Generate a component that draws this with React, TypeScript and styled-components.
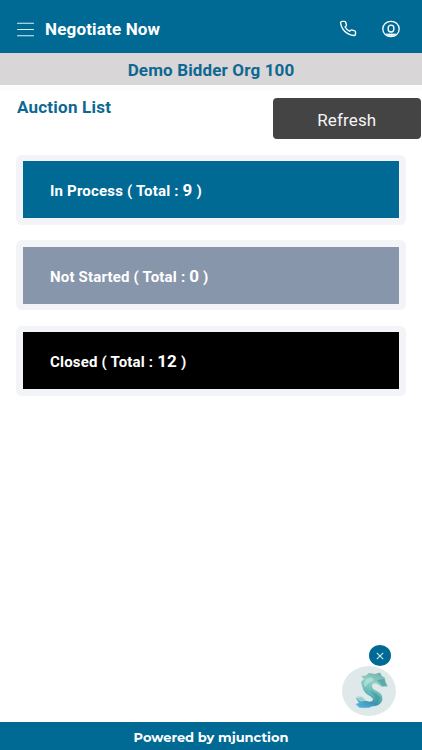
import React from "react";
import styled, { createGlobalStyle } from "styled-components";

const Global = createGlobalStyle`
  * { box-sizing: border-box; }
  html, body { margin: 0; padding: 0; background: #fff; }
  body { font-family: Roboto, "Liberation Sans", sans-serif; overflow: hidden; }
`;

const Screen = styled.div`
  display: flex;
  flex-direction: column;
  height: 750px;
  width: 100%;
  position: relative;
`;

const Header = styled.header`
  flex: none;
  height: 53px;
  background: #006a95;
  color: #fff;
  display: flex;
  align-items: center;
  padding: 5px 22px 0 17px;
`;

const Title = styled.h1`
  margin: 0 auto 0 11px;
  font-size: 17px;
  line-height: 20px;
  font-weight: 700;
  letter-spacing: 0.17px;
`;

const PhoneIcon = styled.svg`
  margin: -2px 25px 0 0;
`;

const UserIcon = styled.svg`
  margin-top: -1px;
`;

const OrgBand = styled.div`
  flex: none;
  height: 32px;
  background: #d8d6d7;
  color: #0d6891;
  text-align: center;
  font-size: 17px;
  line-height: 34px;
  font-weight: 700;
  letter-spacing: 0.15px;
`;

const Content = styled.main`
  flex: 1;
  border-top: 5px solid #fcfcfc;
`;

const ListHead = styled.div`
  display: flex;
  justify-content: space-between;
  align-items: flex-start;
  height: 65px;
  padding: 8px 1px 0 17px;
`;

const ListTitle = styled.h2`
  margin: -1px 0 0;
  color: #0d6891;
  font-size: 17px;
  line-height: 20px;
  font-weight: 700;
  letter-spacing: 0.22px;
`;

const RefreshButton = styled.button`
  width: 148.5px;
  height: 41px;
  padding: 2px 0 0;
  border: 0;
  border-radius: 4px;
  background: #444;
  color: #f5f5f5;
  font: 400 17px Roboto, sans-serif;
  letter-spacing: 0.15px;
`;

const Cards = styled.div`
  display: flex;
  flex-direction: column;
  gap: 15.4px;
  padding: 0 16px;
`;

const Card = styled.div`
  height: 70px;
  padding: 6.4px 7px 6.6px 7px;
  border-radius: 6px;
  background: #f2f4f7;
`;

const CardFill = styled.div<{ $color: string }>`
  height: 57px;
  padding: 2px 27px 0;
  background: ${(p) => p.$color};
  color: #fff;
  display: flex;
  align-items: center;
`;

const CardLabel = styled.div`
  font-size: 15px;
  line-height: 20px;
  font-weight: 700;
  white-space: pre;
  letter-spacing: 0.18px;
`;

const Count = styled.span`
  font-size: 17px;
`;

const Footer = styled.footer`
  flex: none;
  height: 28px;
  background: #006a95;
  color: #fff;
  text-align: center;
  font: 700 13px/30px Montserrat, Inter, sans-serif;
`;

const ChatWidget = styled.div`
  position: absolute;
  right: 26px;
  bottom: 34px;
  width: 54px;
  height: 71px;
  display: flex;
  flex-direction: column;
  align-items: center;
`;

const CloseButton = styled.button`
  flex: none;
  width: 22px;
  height: 21px;
  margin-left: 22px;
  padding: 0;
  border: 0;
  border-radius: 50%;
  background: #006a95;
  display: grid;
  place-items: center;
`;

const Avatar = styled.div`
  flex: none;
  width: 54px;
  height: 50px;
  border-radius: 50%;
  background: #e0e9e9;
`;

const groups = [
  { name: "In Process", total: 9, color: "#006a95" },
  { name: "Not Started", total: 0, color: "#8896ab" },
  { name: "Closed", total: 12, color: "#000" },
];

export default function App() {
  return (
    <Screen>
      <Global />
      <Header>
        <svg width="17" height="15" viewBox="0 0 17 15" stroke="#dceff7" strokeWidth="1.05" strokeLinecap="round">
          <path d="M.5 1.2h16M.5 7.5h16M.5 13.8h16" />
        </svg>
        <Title>Negotiate Now</Title>
        <PhoneIcon width="18" height="17" viewBox="0 0 24 24" preserveAspectRatio="none" fill="none" stroke="#fff" strokeWidth="1.9" strokeLinejoin="round">
          <path d="M22 16.92v3a2 2 0 0 1-2.18 2 19.79 19.79 0 0 1-8.63-3.07 19.5 19.5 0 0 1-6-6A19.79 19.79 0 0 1 2.12 4.18 2 2 0 0 1 4.11 2h3a2 2 0 0 1 2 1.72 12.84 12.84 0 0 0 .7 2.81 2 2 0 0 1-.45 2.11L8.09 9.91a16 16 0 0 0 6 6l1.27-1.27a2 2 0 0 1 2.11-.45 12.84 12.84 0 0 0 2.81.7A2 2 0 0 1 22 16.92z" />
        </PhoneIcon>
        <UserIcon width="18" height="18" viewBox="0 0 18 18" fill="none" stroke="#fff">
          <ellipse cx="9" cy="9" rx="8.2" ry="7.7" strokeWidth="1.3" />
          <rect x="6.2" y="5.1" width="5.6" height="6.9" rx="2.7" strokeWidth="1.4" />
          <path d="M4.2 14H13.8Q9 17.6 4.2 14Z" fill="#fff" strokeWidth=".7" />
        </UserIcon>
      </Header>
      <OrgBand>Demo Bidder Org 100</OrgBand>
      <Content>
        <ListHead>
          <ListTitle>Auction List</ListTitle>
          <RefreshButton>Refresh</RefreshButton>
        </ListHead>
        <Cards>
          {groups.map((g) => (
            <Card key={g.name}>
              <CardFill $color={g.color}>
                <CardLabel>
                  {g.name} ( Total : <Count>{g.total}</Count> )
                </CardLabel>
              </CardFill>
            </Card>
          ))}
        </Cards>
      </Content>
      <Footer>Powered by mjunction</Footer>
      <ChatWidget>
        <CloseButton aria-label="Close chat">
          <svg width="8" height="8" viewBox="0 0 8 8" stroke="#d5eaf2" strokeWidth="1.1">
            <path d="M.8.8l6.4 6.4M7.2.8L.8 7.2" />
          </svg>
        </CloseButton>
        <Avatar>
          <svg width="54" height="50" viewBox="0 0 54 50">
            <defs>
              <linearGradient id="wash" x1=".7" y1="0" x2=".35" y2="1">
                <stop offset="0" stopColor="#6fb3ab" />
                <stop offset=".3" stopColor="#93cfc5" />
                <stop offset=".6" stopColor="#62b9b6" />
                <stop offset=".82" stopColor="#3b93ae" />
                <stop offset="1" stopColor="#62b8e0" />
              </linearGradient>
              <filter id="soft">
                <feGaussianBlur stdDeviation=".4" />
              </filter>
            </defs>
            <g filter="url(#soft)">
              <path
                fill="url(#wash)"
                d="M19 10L24 9.5L27 7L33 8L38 6.5L40 10L43 12L43.5 16L46 20.5L40 21L36 18.5Q32 16 30 19Q29.5 22 33 24L38 27Q42 31 39.5 36Q37 40 30 40.5Q26 43 17 41.5L13.5 38L17 37L14 32L20 31L23 34.5Q29 37 31 34Q31 31.5 27 29.5Q21 26 20.5 21L19 16L22 13Z"
              />
              <path fill="#b5e2dc" opacity=".75" d="M13 31L18 29.5L23 32.5L24 35L18 35.5ZM24 13L29 11L32 14L27 17L23 21L21.5 18Z" />
              <path fill="#3b9199" opacity=".55" d="M35 14L42 13L45 20L40 20ZM28 24L35 28L39 32L34 37L33 31Z" />
              <path fill="#3d9bc6" opacity=".5" d="M15 38L25 37L31 38L27 41L18 41Z" />
            </g>
          </svg>
        </Avatar>
      </ChatWidget>
    </Screen>
  );
}
